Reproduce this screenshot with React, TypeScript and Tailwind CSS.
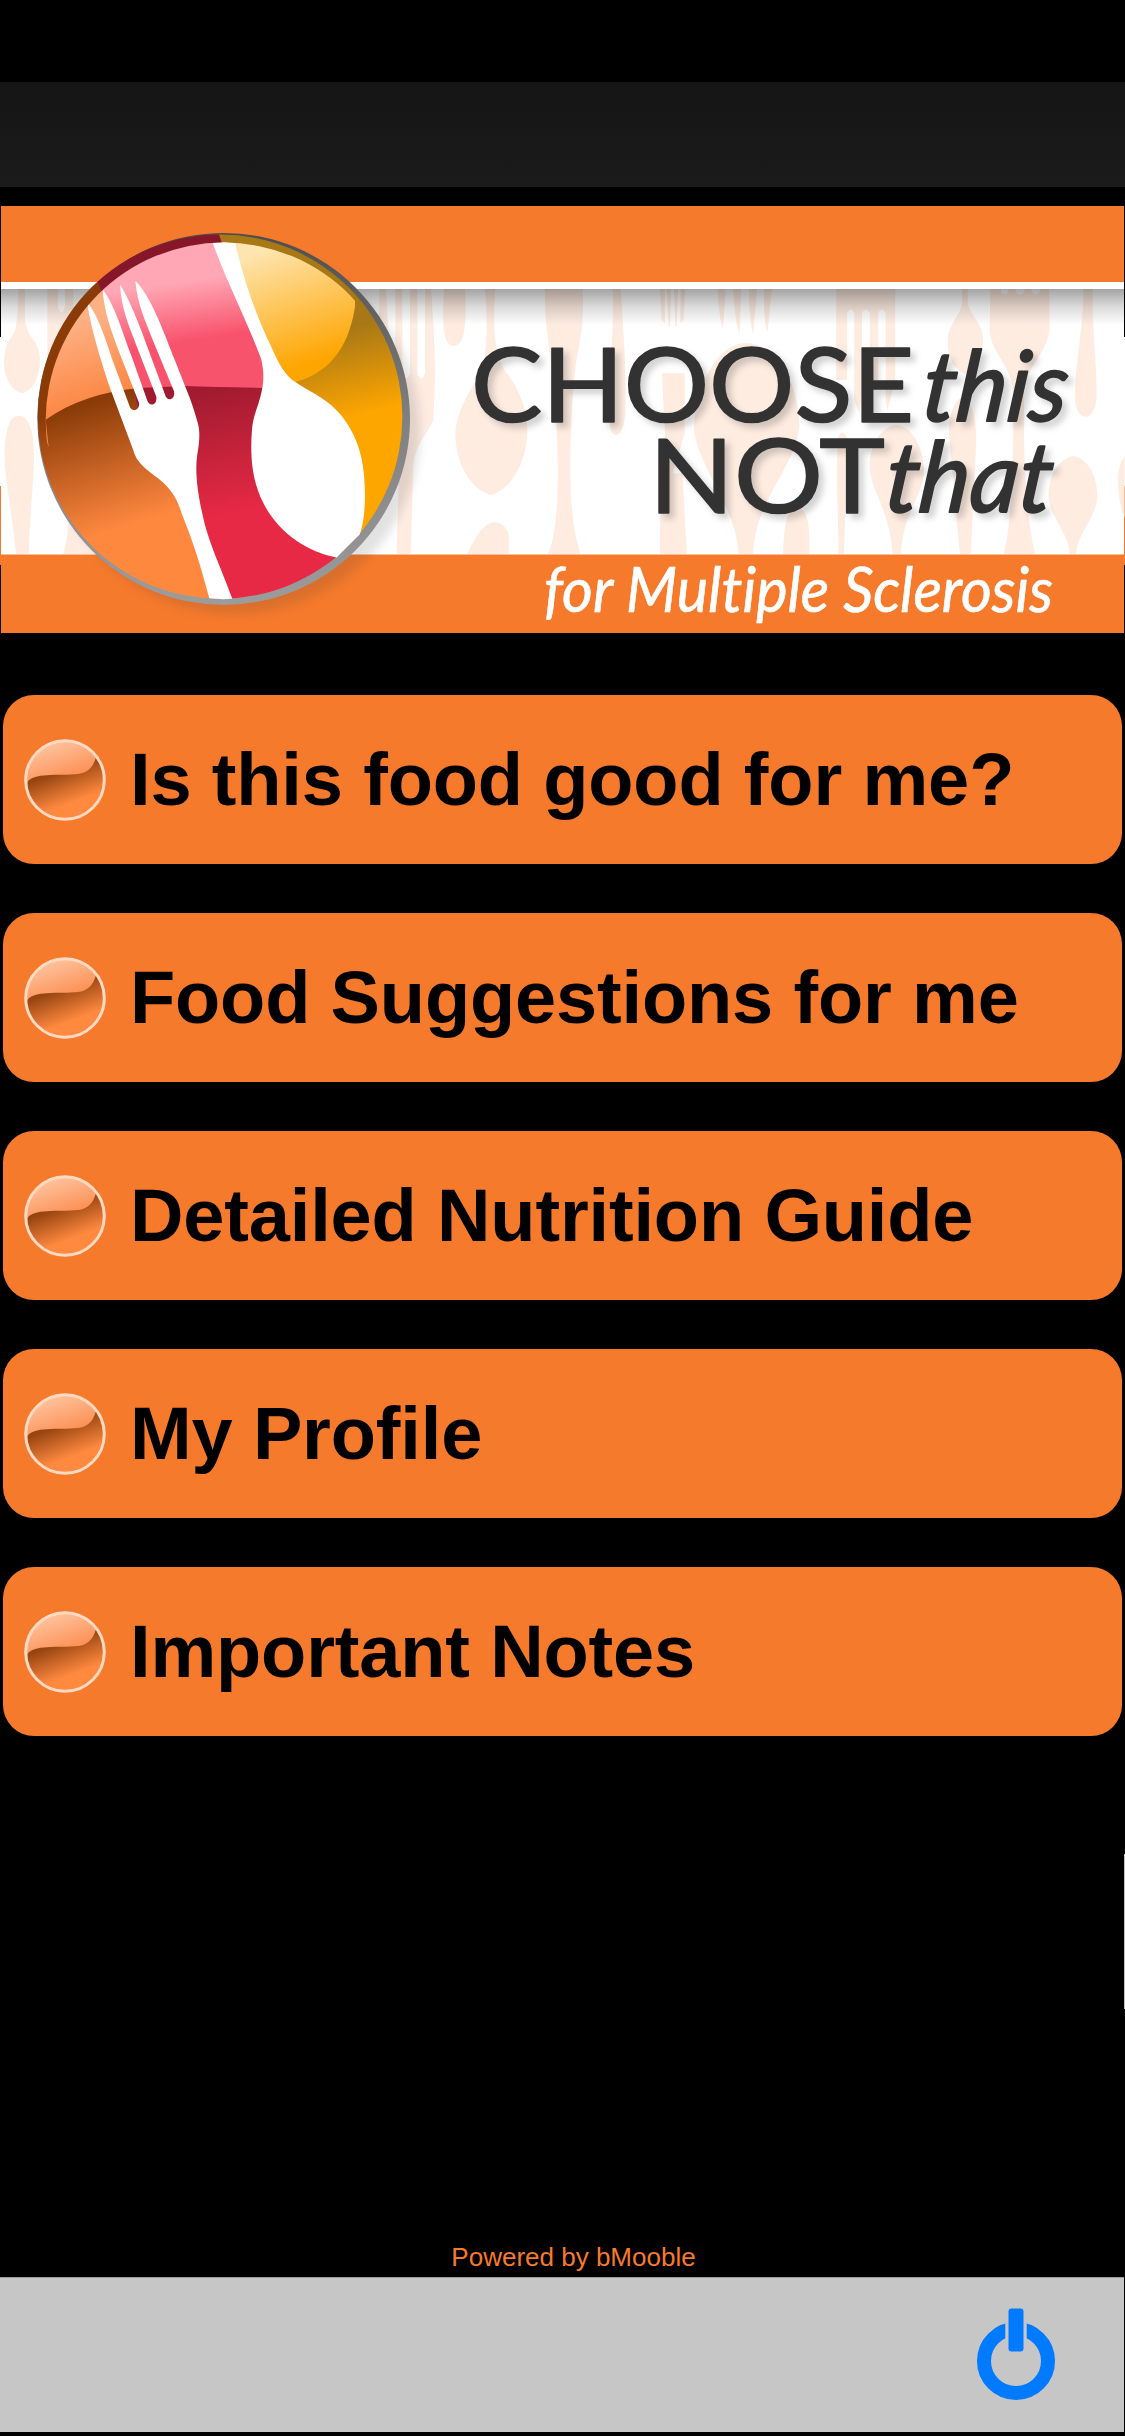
const MENU_ITEMS = [
  { id: "check", label: "Is this food good for me?" },
  { id: "suggestions", label: "Food Suggestions for me" },
  { id: "nutrition", label: "Detailed Nutrition Guide" },
  { id: "profile", label: "My Profile" },
  { id: "notes", label: "Important Notes" },
];

const SILHOUETTE = "#feece1";

// Pale cutlery behind the left part of the banner
function CutleryLeft() {
  return (
    <g transform="translate(0 60) scale(.33333 .38265)" fill={SILHOUETTE}>
      <path d="M55 590H75V680Q78 705 95 725Q122 750 120 795Q110 862 66 871Q17 860 11 790Q15 740 38 720Q55 700 55 590Z" />
      <path d="M57 930C90 930 103 980 102 1040C100 1120 88 1200 87 1291H48C40 1200 10 1080 14 1020C18 960 30 930 57 930Z" />
      <path d="M142 590H174V645Q184 675 195 645V590H220V645H260V800H142Z" />
      <path d="M190 1291C205 1240 210 1200 205 1150L300 1291Z" />
      <path d="M1138 590H1158L1170 800H1186V590H1207V820Q1218 845 1230 820V590H1252V820Q1263 845 1275 820V590H1293C1300 690 1305 760 1305 830L1300 940C1290 970 1245 1000 1240 1060L1232 1291H1190L1198 1040C1195 980 1140 940 1135 830Z" />
    </g>
  );
}

// Pale cutlery behind the title
function CutleryRight() {
  return (
    <g transform="translate(440 180) scale(.43687 .33333)" fill={SILHOUETTE}>
      <path d="M10 310C5 420 3 498 32 498C57 498 62 430 57 310Z" />
      <path d="M102 310H128C120 420 122 520 150 575C180 620 200 690 200 750C200 850 160 930 117 945C70 930 35 850 35 760C40 680 80 610 95 570C108 520 110 430 102 310Z" />
      <path d="M245 310H325C335 450 310 520 307 600C295 800 290 1000 322 1122H247C270 1060 275 900 265 700C262 560 235 450 241 310Z" />
      <path d="M395 310H413C420 450 428 600 424 700C420 784 388 784 388 720C385 600 400 450 395 310Z" />
      <path d="M503 310H514L515 430L507 420ZM519 310H529L527 440H523ZM535 310H545L542 440H539ZM551 310H562L558 420L550 430Z" />
      <path d="M508 580H560V760L530 890H520Z" />
      <path d="M505 880H555L565 1122H503Z" />
      <path d="M635 310H655L648 445Q640 430 635 327ZM671 310H690L686 462Q675 430 671 327ZM707 310H727L717 462Q708 430 707 327ZM742 310H761L750 455Q740 430 742 327Z" />
      <path d="M700 489C770 489 825 620 822 740C815 860 720 960 717 1122H683C680 990 600 880 582 760C580 640 630 489 700 489Z" />
      <path d="M907 310H1042V600L1024 692L1020 660V400Q1012 375 1003 400V600L984 640V400Q975 375 966 400V640L960 700L948 660V400Q940 375 932 400V600L907 600Z" />
      <path d="M911 775Q920 740 931 775C938 900 925 1000 925 1122H912C912 1000 905 900 911 775Z" />
      <path d="M1045 735C1090 740 1110 830 1108 880C1100 960 1060 1000 1055 1122H1036C1030 990 985 930 983 860C985 790 1010 740 1045 735Z" />
      <path d="M1195 310H1208V370C1215 410 1243 430 1243 480C1243 530 1225 570 1202 582C1175 570 1162 530 1162 480C1165 430 1190 410 1195 370Z" />
      <path d="M1260 310H1284V335Q1292 352 1301 335V310H1318V335Q1328 352 1338 335V310H1354V335Q1364 352 1373 335V310H1395V450C1390 520 1340 560 1337 640C1335 820 1340 1000 1362 1122H1290C1315 1000 1312 760 1312 640C1312 560 1260 520 1258 450Z" />
      <path d="M1197 650C1220 660 1230 740 1227 800L1215 1122H1190L1165 760Q1165 670 1197 650Z" />
      <path d="M1473 310H1495C1490 420 1505 560 1503 650C1500 730 1455 730 1453 650C1455 540 1475 420 1473 310Z" />
      <path d="M1450 828C1490 840 1505 900 1505 950C1500 1020 1458 1060 1456 1122H1442C1440 1060 1395 1010 1393 950C1393 890 1415 835 1450 828Z" />
      <path d="M125 1025C150 1030 158 1060 158 1070V1122H62C80 1070 100 1030 125 1025Z" />
      <path d="M800 1000C830 960 850 1000 845 1122H785C787 1060 790 1020 800 1000Z" />
      <path d="M1567 830Q1552 850 1552 900Q1554 980 1567 1012Z" />
    </g>
  );
}

function Emblem() {
  return (
    <g transform="translate(0 60) scale(.33333 .38265)">
      <defs>
        <linearGradient id="rim" x1="0" y1="0" x2="0" y2="1">
          <stop offset="0" stopColor="#4d4d4d" />
          <stop offset=".5" stopColor="#808080" />
          <stop offset="1" stopColor="#9c9c9c" />
        </linearGradient>
        <linearGradient id="darkOrange" gradientUnits="userSpaceOnUse" x1="250" y1="900" x2="340" y2="1230">
          <stop offset="0" stopColor="#8a3b08" />
          <stop offset="1" stopColor="#ff883f" />
        </linearGradient>
        <linearGradient id="darkRed" gradientUnits="userSpaceOnUse" x1="560" y1="550" x2="680" y2="1190">
          <stop offset="0" stopColor="#871628" />
          <stop offset=".3" stopColor="#951a2c" />
          <stop offset=".5" stopColor="#a21b30" />
          <stop offset="1" stopColor="#e72945" />
        </linearGradient>
        <linearGradient id="darkYellow" gradientUnits="userSpaceOnUse" x1="1010" y1="710" x2="1060" y2="935">
          <stop offset="0" stopColor="#a97816" />
          <stop offset="1" stopColor="#fea600" />
        </linearGradient>
        <linearGradient id="lightOrange" gradientUnits="userSpaceOnUse" x1="210" y1="690" x2="270" y2="900">
          <stop offset="0" stopColor="#fdb084" />
          <stop offset="1" stopColor="#fc8743" />
        </linearGradient>
        <linearGradient id="lightPink" gradientUnits="userSpaceOnUse" x1="540" y1="580" x2="560" y2="735">
          <stop offset="0" stopColor="#ffa7b5" />
          <stop offset="1" stopColor="#f8536c" />
        </linearGradient>
        <linearGradient id="lightYellow" gradientUnits="userSpaceOnUse" x1="790" y1="500" x2="880" y2="810">
          <stop offset="0" stopColor="#fee4ae" />
          <stop offset="1" stopColor="#fea500" />
        </linearGradient>
        <clipPath id="plate">
          <ellipse cx="660" cy="932" rx="547" ry="476" />
        </clipPath>
        <clipPath id="glass">
          <ellipse cx="671" cy="943" rx="534" ry="466" />
        </clipPath>
        <filter id="plateShadow" x="-20%" y="-20%" width="140%" height="140%">
          <feGaussianBlur stdDeviation="14" />
        </filter>
      </defs>

      <ellipse cx="704" cy="968" rx="556" ry="480" fill="#333" opacity=".14" filter="url(#plateShadow)" />
      <ellipse cx="671" cy="938" rx="559" ry="486" fill="url(#rim)" />

      <g clipPath="url(#plate)">
        <path d="M100 440H240L295 583L400 850L430 1000L540 1110L575 1200L660 1430H100Z" fill="url(#darkOrange)" />
        <path d="M240 440H651L700 560L787 860L850 1060L1100 1250V1430H660L575 1200L540 1110L430 1000L400 850L295 583Z" fill="url(#darkRed)" />
        <path d="M651 440H1230V1250H1060L850 1060L800 860L770 720L690 540Z" fill="url(#darkYellow)" />
      </g>

      <g clipPath="url(#glass)">
        <path d="M130 440H240L302 590L420 857Q250 870 137 940L146 1012Q130 980 130 900Z" fill="url(#lightOrange)" />
        <path d="M240 440H660L800 700V857Q650 855 555 852L415 857L302 590Z" fill="url(#lightPink)" />
        <path d="M665 470H1065V645C1045 760 980 820 885 842L810 840L775 720L700 560Z" fill="url(#lightYellow)" />
        <path d="M638 477C670 560 745 690 783 780C793 815 791 840 786 862C780 895 760 925 756 965C748 1050 762 1110 790 1158C835 1235 920 1286 1010 1300L1079 1240C1097 1200 1097 1130 1092 1085C1086 1010 1050 945 994 902C955 874 905 855 875 835C845 812 830 780 815 752C775 680 735 590 706 480V470H638Z" fill="#fff" />
        <path d="M262 635C270 690 300 780 332 862L400 1020C412 1062 460 1080 490 1105C520 1130 535 1155 545 1185C580 1260 605 1330 628 1408V1420H702L697 1408C660 1320 625 1260 608 1190C590 1120 585 1070 592 1030C600 990 600 965 592 945C580 905 567 878 555 852L525 785C490 710 455 620 406 577C412 640 440 690 455 725L522 866C527 890 499 893 495 874L440 745C420 695 385 620 360 587C364 650 385 690 410 748L469 880C472 904 446 907 441 888L393 770C370 720 345 640 308 600C312 660 335 710 355 758L417 896C420 918 393 922 388 903L340 790C318 735 295 665 262 635Z" fill="#fff" />
      </g>
    </g>
  );
}

function Banner() {
  return (
    <svg viewBox="0 187 1125 446" className="block h-[446px] w-[1125px] shrink-0 [font-variant-ligatures:none]">
      <defs>
        <linearGradient id="bandShadow" x1="0" y1="0" x2="0" y2="1">
          <stop offset="0" stopColor="#000" stopOpacity=".36" />
          <stop offset=".5" stopColor="#000" stopOpacity=".14" />
          <stop offset="1" stopColor="#000" stopOpacity="0" />
        </linearGradient>
        <filter id="titleShadow" x="-5%" y="-10%" width="115%" height="130%">
          <feDropShadow dx="5" dy="5" stdDeviation="3" floodColor="#000" floodOpacity=".18" />
        </filter>
      </defs>

      <rect x="0" y="337" width="1125" height="149" fill="#fff" />
      <rect x="0" y="486" width="1125" height="79" fill="#f67a2c" />
      <rect x="1" y="206" width="1123" height="427" fill="#f67a2c" />
      <rect x="1" y="282" width="1123" height="272.5" fill="#fff" />
      <CutleryLeft />
      <CutleryRight />
      <rect x="1" y="282" width="1123" height="7" fill="#fff" />
      <rect x="1" y="289" width="1123" height="36" fill="url(#bandShadow)" />
      <Emblem />

      <g fill="#333" stroke="#333" strokeLinejoin="round" filter="url(#titleShadow)" fontFamily="Lato, sans-serif">
        <text x="471" y="421.5" fontSize="102" strokeWidth="1.6" textLength="443" lengthAdjust="spacingAndGlyphs">CHOOSE</text>
        <text x="649" y="512.5" fontSize="102" strokeWidth="1.6" textLength="236" lengthAdjust="spacingAndGlyphs">NOT</text>
        <text transform="translate(920 421) skewX(-6)" fontSize="98" fontStyle="italic" strokeWidth="1.8" textLength="145" lengthAdjust="spacingAndGlyphs">this</text>
        <text transform="translate(883 512) skewX(-6)" fontSize="98" fontStyle="italic" strokeWidth="1.8" textLength="167" lengthAdjust="spacingAndGlyphs">that</text>
      </g>
      <text
        x="544"
        y="612"
        fontSize="62"
        fontStyle="italic"
        fontFamily="Lato, sans-serif"
        fill="#fff"
        stroke="#fff"
        strokeWidth=".7"
        textLength="509"
        lengthAdjust="spacingAndGlyphs"
      >
        for Multiple Sclerosis
      </text>
    </svg>
  );
}

function Bullet() {
  return (
    <svg viewBox="0 0 82 82" className="size-[82px] shrink-0">
      <defs>
        <linearGradient id="bulletDark" x1=".35" y1=".42" x2=".5" y2=".82">
          <stop offset="0" stopColor="#984511" />
          <stop offset="1" stopColor="#ff893f" />
        </linearGradient>
        <linearGradient id="bulletLight" x1=".2" y1=".1" x2=".7" y2="1">
          <stop offset="0" stopColor="#ffc49f" />
          <stop offset="1" stopColor="#fb8647" />
        </linearGradient>
      </defs>
      <circle cx="41" cy="41" r="39.5" fill="url(#bulletDark)" />
      <path d="M2 45A39 39 0 0 1 72 18C69 29 63 34 54 35C35 37 8 33 3 44Z" fill="url(#bulletLight)" />
      <circle cx="41" cy="41" r="39.3" fill="none" stroke="#ffd9c2" strokeWidth="3" />
    </svg>
  );
}

function PowerIcon() {
  return (
    <svg viewBox="0 0 80 94" className="h-[94px] w-[80px]">
      <circle cx="40" cy="53" r="32" fill="none" stroke="#007aff" strokeWidth="14" />
      <rect x="29.3" y="0" width="21.4" height="48" fill="#c6c6c6" />
      <rect x="32.5" y=".5" width="15" height="43" rx="3" fill="#007aff" />
    </svg>
  );
}

export default function App() {
  return (
    <div className="relative flex h-[2436px] w-[1125px] flex-col overflow-hidden bg-black pt-[82px] font-['Liberation_Sans',Arial,sans-serif]">
      <div className="h-[105px] shrink-0 bg-linear-to-b from-[#151515] to-[#1b1b1b]" />
      <Banner />

      <nav className="mt-[62px] flex flex-col gap-[49px] px-[3px]">
        {MENU_ITEMS.map((item) => (
          <button
            key={item.id}
            className="flex h-[169px] w-full items-center rounded-[31px] bg-[#f67a2c] pl-[21px] text-left"
          >
            <Bullet />
            <span className="ml-6 text-[74px] leading-none font-bold tracking-[-0.15px] whitespace-nowrap text-black">
              {item.label}
            </span>
          </button>
        ))}
      </nav>

      <footer className="mt-auto">
        <p className="pb-[5px] pl-[22px] text-center text-[26px] leading-[30px] text-[#f67a2c]">Powered by bMooble</p>
        <div className="mr-px mb-[4px] flex h-[155px] items-center justify-end border-t border-[#999] bg-[#c6c6c6] pr-[68px]">
          <PowerIcon />
        </div>
      </footer>

      {/* Scroll indicator */}
      <div className="absolute top-[1854px] right-0 h-[155px] w-px bg-[#c6c6c6]" />
    </div>
  );
}
